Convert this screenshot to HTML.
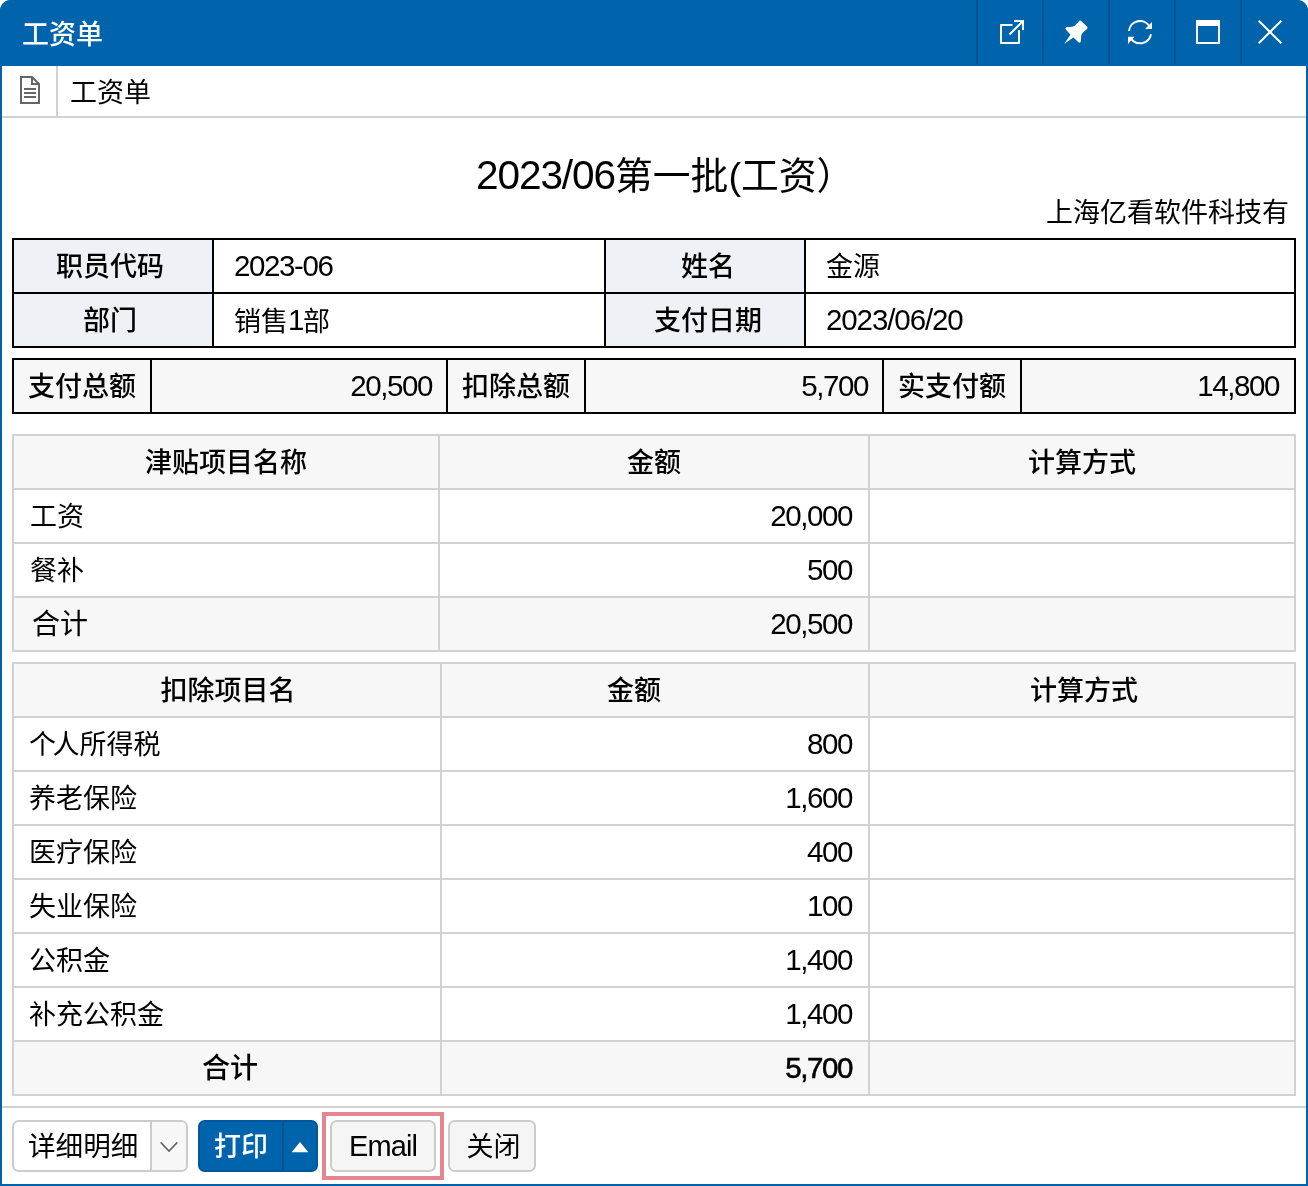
<!DOCTYPE html>
<html lang="zh-CN">
<head>
<meta charset="utf-8">
<title>工资单</title>
<style>
*{box-sizing:border-box;margin:0;padding:0}
html,body{width:1308px;height:1186px;background:#fff;overflow:hidden}
body{font-family:"Liberation Sans","Noto Sans CJK SC",sans-serif;font-size:27px;color:#000;position:relative}
.win{will-change:transform;position:absolute;left:0;top:0;width:1308px;height:1186px;background:#0064ad;border-radius:11px 11px 0 0;overflow:hidden}
.paper{position:absolute;left:2px;top:66px;width:1304px;height:1118px;background:#fff}
.inner{position:absolute;left:2px;top:2px;width:1304px;height:1182px}
.abs{position:absolute}
/* title bar */
.tbar{position:absolute;left:-2px;top:-2px;width:1308px;height:66px;background:#0064ad}
.tbar .ttl{position:absolute;left:22px;top:2px;height:66px;line-height:66px;color:#fff;font-size:27px;font-weight:500;white-space:nowrap}
/* sub header */
.sub{position:absolute;left:0;top:64px;width:1304px;height:52px;border-bottom:2px solid #d1d1d1}
.sub .ico{position:absolute;left:0;top:0;width:54px;height:50px}
.sub .sep{position:absolute;left:54px;top:0;width:2px;height:50px;background:#d1d1d1}
.sub .txt{position:absolute;left:68px;top:2px;height:50px;line-height:50px;white-space:nowrap}
/* headings */
.h1{position:absolute;left:0;top:146px;width:1304px;height:54px;line-height:54px;font-size:37.8px;white-space:nowrap}
.comp{position:absolute;right:17px;top:191px;height:40px;line-height:40px;white-space:nowrap}
/* tables */
table{position:absolute;left:10px;width:1284px;border-collapse:separate;border-spacing:0;table-layout:fixed}
td,th{height:54px;line-height:48px;padding-top:3px;font-weight:400;white-space:nowrap;overflow:hidden;vertical-align:top}
.tk{border-top:2px solid #000;border-left:2px solid #000}
.tk td,.tk th{border-right:2px solid #000;border-bottom:2px solid #000}
.tk th{background:#eef1f6;font-weight:500;text-align:center}
.tk td{padding-left:20px;text-align:left}
.tk th.l1{padding-right:6px}
.tk th.l3{padding-left:6px}
.tt th{background:#f7f7f7}
.tt td{background:#f7f7f7;text-align:right;padding:3px 14px 0 0}
.tg{border-top:2px solid #d2d2d2;border-left:2px solid #d2d2d2}
.tg td,.tg th{border-right:2px solid #d2d2d2;border-bottom:2px solid #d2d2d2}
.tg th{background:#f7f7f7;font-weight:500;text-align:center}
.tg td{padding-left:16px;text-align:left}
.tg td.n{text-align:right;padding:3px 16px 0 0}
.tg tr.sum td{background:#f7f7f7}
.tg tr.sum td:first-child{padding-left:18px;font-size:28px}
.t2 td{padding-left:15px}
.tg tr.sumb td{background:#f7f7f7;font-weight:500}
.tg tr.sumb td:first-child{font-size:28px}
.tg tr.sumb td.n{-webkit-text-stroke:0.55px #000}
.d{font-size:29.5px;letter-spacing:-1.4px;position:relative;top:-1px}
/* footer */
.fline{position:absolute;left:0;top:1104px;width:1304px;height:2px;background:#d1d1d1}
.btn{position:absolute;top:1118px;height:52px;border:2px solid #ccc;border-radius:6.5px;background:#f5f5f5;line-height:50px;text-align:center;white-space:nowrap}
</style>
</head>
<body>
<div class="win">
<div class="paper"></div>
<div class="inner">
  <div class="tbar">
    <div class="ttl">工资单</div>
    <svg class="abs" style="left:0;top:0" width="1308" height="66" viewBox="0 0 1308 66">
      <g fill="#005494"><rect x="976" y="0" width="2" height="64"/><rect x="1042" y="0" width="2" height="64"/><rect x="1108" y="0" width="2" height="64"/><rect x="1174" y="0" width="2" height="64"/><rect x="1240" y="0" width="2" height="64"/></g>
      <g fill="none" stroke="#fff" stroke-width="2" stroke-linejoin="round">
        <path d="M1012.5 25H1001V43H1019V30"/>
        <path d="M1009.5 34.5L1023 21M1014 21H1023V30" stroke-linejoin="miter"/>
        <path d="M1129 31A11 11 0 0 1 1149.5 26.5"/>
        <path d="M1151 34.3A11 11 0 0 1 1130.5 37.5"/>
        <rect x="1197" y="21" width="22" height="22" stroke-linejoin="miter"/>
        <path d="M1258.7 20.7L1281.3 43.3M1281.3 20.7L1258.7 43.3"/>
      </g>
      <g fill="#fff">
        <path d="M1152 22V29H1145Z"/>
        <path d="M1128 44V36.7H1134.5Z"/>
        <rect x="1196" y="20" width="24" height="6"/>
        <path transform="translate(1084 24) rotate(45)" d="M-4.2 -0.2H4.2Q5.7 -0.2 5.6 1.3L5.2 7C5.4 11 9.2 12.3 10.2 15.1Q10.6 16.7 9 16.7L2 17.1L0 28.2L-2 17.1L-9 16.7Q-10.6 16.7 -10.2 15.1C-9.2 12.3 -5.4 11 -5.2 7L-5.6 1.3Q-5.7 -0.2 -4.2 -0.2Z"/>
      </g>
    </svg>
  </div>
  <div class="sub">
    <div class="ico"><svg class="abs" style="left:0;top:0" width="54" height="50" viewBox="0 0 54 50">
      <g fill="none" stroke="#666" stroke-width="2"><path d="M19 11H30L37 18V37H19Z"/><path d="M30 11V18H37"/><path d="M22 23H34M22 27H34M22 31H34"/></g></svg></div>
    <div class="sep"></div>
    <div class="txt">工资单</div>
  </div>
  <div class="h1"><span style="position:absolute;left:474px"><span style="font-size:40.6px;letter-spacing:-1.1px">2023/06</span>第一批(工资）</span></div>
  <div class="comp">上海亿看软件科技有</div>

  <table class="tk" style="top:236px">
    <colgroup><col style="width:200px"><col style="width:392px"><col style="width:200px"><col style="width:490px"></colgroup>
    <tr><th class="l1">职员代码</th><td><span class="d">2023-06</span></td><th class="l3">姓名</th><td>金源</td></tr>
    <tr><th class="l1">部门</th><td>销售<span class="d">1</span>部</td><th class="l3">支付日期</th><td><span class="d" style="letter-spacing:-1.1px">2023/06/20</span></td></tr>
  </table>

  <table class="tk tt" style="top:356px">
    <colgroup><col style="width:138px"><col style="width:296px"><col style="width:138px"><col style="width:298px"><col style="width:138px"><col style="width:274px"></colgroup>
    <tr><th>支付总额</th><td><span class="d">20,500</span></td><th>扣除总额</th><td><span class="d">5,700</span></td><th>实支付额</th><td style="padding-right:15px"><span class="d">14,800</span></td></tr>
  </table>

  <table class="tg" style="top:432px">
    <colgroup><col style="width:426px"><col style="width:430px"><col style="width:426px"></colgroup>
    <tr><th>津贴项目名称</th><th>金额</th><th>计算方式</th></tr>
    <tr><td>工资</td><td class="n"><span class="d">20,000</span></td><td></td></tr>
    <tr><td>餐补</td><td class="n"><span class="d">500</span></td><td></td></tr>
    <tr class="sum"><td>合计</td><td class="n"><span class="d">20,500</span></td><td></td></tr>
  </table>

  <table class="tg t2" style="top:660px">
    <colgroup><col style="width:428px"><col style="width:428px"><col style="width:426px"></colgroup>
    <tr><th style="padding-left:2px">扣除项目名</th><th style="padding-right:42px">金额</th><th style="padding-left:4px">计算方式</th></tr>
    <tr><td><span style="letter-spacing:-3.6px">个</span>人所得税</td><td class="n"><span class="d">800</span></td><td></td></tr>
    <tr><td>养老保险</td><td class="n"><span class="d">1,600</span></td><td></td></tr>
    <tr><td>医疗保险</td><td class="n"><span class="d">400</span></td><td></td></tr>
    <tr><td>失业保险</td><td class="n"><span class="d">100</span></td><td></td></tr>
    <tr><td>公积金</td><td class="n"><span class="d">1,400</span></td><td></td></tr>
    <tr><td>补充公积金</td><td class="n"><span class="d">1,400</span></td><td></td></tr>
    <tr class="sumb"><td style="text-align:center;padding:3px 0 0 6px">合计</td><td class="n"><span class="d">5,700</span></td><td></td></tr>
  </table>

  <div class="fline"></div>
  <div class="btn" style="left:10px;width:176px;background:#fff;text-align:left;overflow:hidden">
    <span class="abs" style="left:14px;top:0;line-height:50px;font-size:27.6px">详细明细</span>
    <span class="abs" style="left:136px;top:-2px;width:38px;height:52px;background:#f7f7f7;border-left:2px solid #ccc"></span>
    <svg class="abs" style="left:138px;top:-2px" width="36" height="52" viewBox="0 0 36 52"><path d="M8.7 22.4L17 31L25.3 22.4" fill="none" stroke="#666" stroke-width="1.6"/></svg>
  </div>
  <div class="btn" style="left:196px;width:120px;background:#0064ad;border-color:#00589b;color:#fff;font-weight:500;text-align:left">
    <span class="abs" style="left:14px;top:0">打印</span>
    <span class="abs" style="left:82px;top:-2px;width:2px;height:52px;background:#005494"></span>
    <svg class="abs" style="left:84px;top:-2px" width="34" height="52" viewBox="0 0 34 52"><path d="M7.6 32.2L16 22L24.4 32.2Z" fill="#fff"/></svg>
  </div>
  <div class="abs" style="left:320px;top:1110px;width:122px;height:68px;border:4px solid #e3868f"></div>
  <div class="btn" style="left:328px;width:106px"><span style="font-size:29px;letter-spacing:-0.9px;position:relative;top:-1px">Email</span></div>
  <div class="btn" style="left:446px;width:88px;padding-left:3px">关闭</div>
</div>
</div>
</body>
</html>
